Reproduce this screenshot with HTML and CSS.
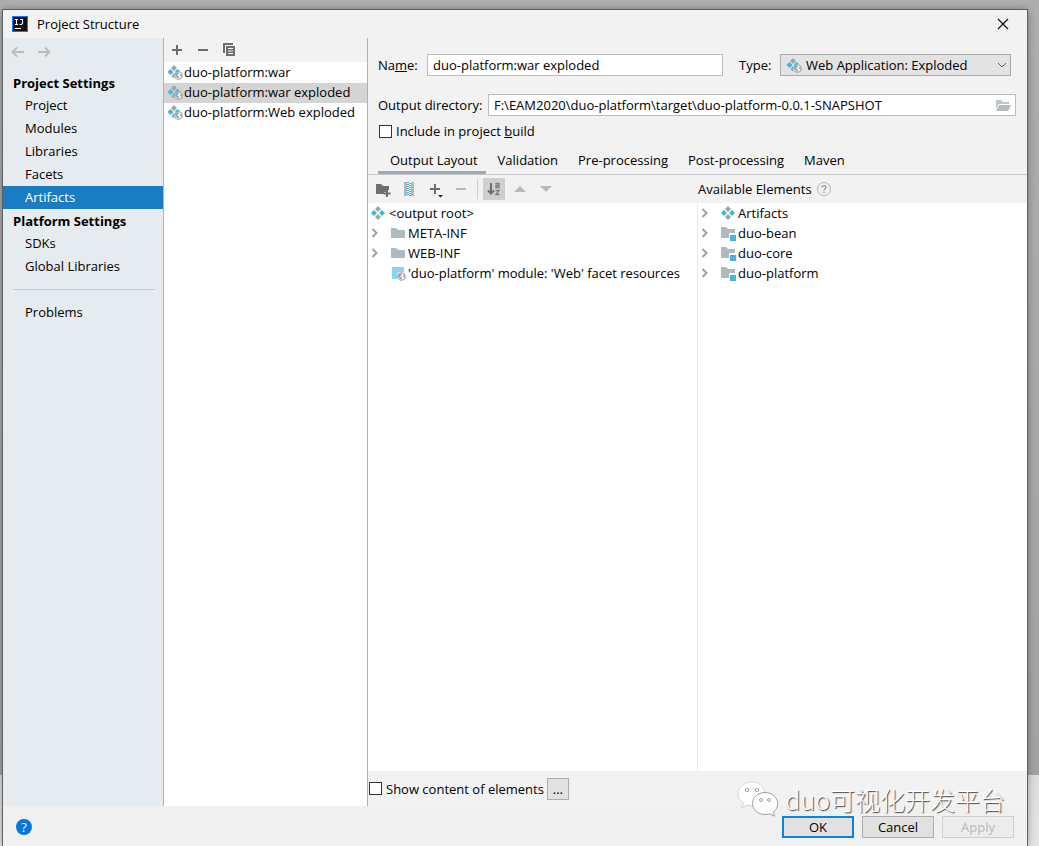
FILE: index.html
```
<!DOCTYPE html>
<html lang="en">
<head>
<meta charset="utf-8">
<title>Project Structure</title>
<link rel="stylesheet" href="styles.css">
</head>
<body>
<svg class="defs" width="0" height="0" aria-hidden="true">
  <symbol id="artifact" viewBox="0 0 16 16">
    <path fill="#9aa7b0" d="M8 1l3 3-3 3-3-3zM8 9l3 3-3 3-3-3z"/>
    <path fill="#40b6e0" d="M4 5l3 3-3 3-3-3zM12 5l3 3-3 3-3-3z"/>
  </symbol>
  <symbol id="globe" viewBox="0 0 8 8">
    <circle cx="4" cy="4" r="3.4" fill="#fff" fill-opacity=".7" stroke="#9aa7b0" stroke-width=".9"/>
    <path fill="#9aa7b0" d="M1 2l1.500-1 2 .5-.5 1.500-1.500.5 2 1.500-.5 2L1 4.500zM5.500 2.500l1.500.500v2l-1.500-.5z"/>
  </symbol>
  <symbol id="web-artifact" viewBox="0 0 16 16">
    <path fill="#9aa7b0" d="M7 1l3 3-3 3-3-3zM6 9.500l1.500-.5-.5 5.500-2.500-2z"/>
    <path fill="#40b6e0" d="M3.500 5l3 3-3 3-3-3zM10.500 5l2.500 2-4 1.500-1.500-.5z"/>
    <use href="#globe" x="7" y="7" width="9" height="9"/>
  </symbol>
  <symbol id="folder" viewBox="0 0 16 16">
    <path fill="#aeb9c0" d="M1 3h5l2 2h7v8H1z"/>
  </symbol>
  <symbol id="module" viewBox="0 0 16 16">
    <path fill="#aeb9c0" d="M1 2h5l2 2h7v4H9v5H1z"/>
    <path fill="#40b6e0" d="M10 10h6v6h-6z"/>
  </symbol>
  <symbol id="facet" viewBox="0 0 16 16">
    <path fill="#8fd3ef" d="M2 2h12v5H9L7 9v5H2z"/>
    <use href="#globe" x="7" y="7" width="9" height="9"/>
  </symbol>
  <symbol id="chevron" viewBox="0 0 10 10">
    <path d="M2.500 1l4 4-4 4" fill="none" stroke="#a0a0a0" stroke-width="2"/>
  </symbol>
</svg>

<main class="dialog">
  <header class="titlebar">
    <svg class="logo" width="16" height="16" viewBox="0 0 16 16" aria-hidden="true">
      <path fill="#087cfa" d="M0 0h16v16H0z"/>
      <path fill="#111" d="M1 1h14v14H1z"/>
      <path d="M3 3.500h3M3 8.500h3M4.500 3.500v5M8 3.500h2.500V7.500l-1 1H7.500M3 12.500h6" fill="none" stroke="#fff" stroke-width="1.100"/>
    </svg>
    <h1 class="title">Project Structure</h1>
    <button class="close" aria-label="Close"><svg width="12" height="12" viewBox="0 0 12 12"><path d="M1 1l10 10M11 1L1 11" stroke="#111" stroke-width="1.200"/></svg></button>
  </header>

  <div class="body">
    <nav class="sidebar">
      <div class="history">
        <button class="arrow" aria-label="Back"><svg width="14" height="12" viewBox="0 0 14 12"><path d="M13 6H1.500M6 1.500L1.500 6 6 10.500" fill="none" stroke="#bcbcbc" stroke-width="1.800"/></svg></button>
        <button class="arrow" aria-label="Forward"><svg width="14" height="12" viewBox="0 0 14 12"><path d="M0 6h11.500M7 1.500L11.500 6 7 10.500" fill="none" stroke="#bcbcbc" stroke-width="1.800"/></svg></button>
      </div>
      <h2 class="group">Project Settings</h2>
      <a class="nav-item" href="#">Project</a>
      <a class="nav-item" href="#">Modules</a>
      <a class="nav-item" href="#">Libraries</a>
      <a class="nav-item" href="#">Facets</a>
      <a class="nav-item selected" href="#">Artifacts</a>
      <h2 class="group">Platform Settings</h2>
      <a class="nav-item" href="#">SDKs</a>
      <a class="nav-item" href="#">Global Libraries</a>
      <hr class="rule">
      <a class="nav-item" href="#">Problems</a>
    </nav>

    <section class="artifacts">
      <div class="list-tools">
        <button class="tool" aria-label="Add"><svg width="16" height="16" viewBox="0 0 16 16"><path d="M8 3v10M3 8h10" stroke="#6e6e6e" stroke-width="2"/></svg></button>
        <button class="tool" aria-label="Remove"><svg width="16" height="16" viewBox="0 0 16 16"><path d="M3 8h10" stroke="#6e6e6e" stroke-width="2"/></svg></button>
        <button class="tool" aria-label="Copy"><svg width="16" height="16" viewBox="0 0 16 16"><path d="M3 11V2h9" fill="none" stroke="#6e6e6e" stroke-width="2"/><path fill="#6e6e6e" d="M5 4h9v10H5z"/><path d="M7 6.500h5M7 9h5M7 11.500h5" stroke="#f2f2f2"/></svg></button>
      </div>
      <ul class="list">
        <li><button class="row"><svg class="icon"><use href="#web-artifact"/></svg>duo-platform:war</button></li>
        <li><button class="row current"><svg class="icon"><use href="#web-artifact"/></svg>duo-platform:war exploded</button></li>
        <li><button class="row"><svg class="icon"><use href="#web-artifact"/></svg>duo-platform:Web exploded</button></li>
      </ul>
    </section>

    <section class="editor">
      <form class="form">
        <div class="field-row top">
          <label class="name-label" for="name">Na<u>m</u>e:</label>
          <input class="text name" id="name" value="duo-platform:war exploded">
          <label class="type-label" for="type">Type:</label>
          <div class="select-wrap">
            <select class="type" id="type"><option>Web Application: Exploded</option></select>
            <svg class="icon select-icon"><use href="#web-artifact"/></svg>
            <svg class="select-arrow" width="10" height="6" viewBox="0 0 10 6"><path d="M1 1l4 4 4-4" fill="none" stroke="#666"/></svg>
          </div>
        </div>
        <div class="field-row">
          <label class="dir-label" for="dir">Output directory:</label>
          <div class="dir-wrap">
            <input class="text dir" id="dir" value="F:\EAM2020\duo-platform\target\duo-platform-0.0.1-SNAPSHOT">
            <button type="button" class="browse" aria-label="Browse"><svg width="16" height="14" viewBox="0 0 16 14"><path fill="#c0c6ca" d="M1 2h5l2 2h6v2H4L1 11z"/><path fill="#b4bcc1" d="M4.500 7H16l-3 6H1z"/></svg></button>
          </div>
        </div>
        <label class="check include"><input type="checkbox" class="box"><span>Include in project <u>b</u>uild</span></label>
      </form>

      <div class="tabs" role="tablist">
        <button class="tab active" role="tab" aria-selected="true">Output Layout</button>
        <button class="tab" role="tab">Validation</button>
        <button class="tab" role="tab">Pre-processing</button>
        <button class="tab" role="tab">Post-processing</button>
        <button class="tab" role="tab">Maven</button>
      </div>

      <div class="panes">
        <div class="pane left">
          <div class="pane-tools">
            <button class="tool" aria-label="New folder"><svg width="16" height="16" viewBox="0 0 16 16"><path fill="#6e6e6e" d="M1 3h5l2 2h6v4h-3v2H9v2H1z"/><path d="M12 9v7M8.500 12.500h7" stroke="#6e6e6e" stroke-width="2"/></svg></button>
            <button class="tool" aria-label="New archive"><svg width="16" height="16" viewBox="0 0 16 16"><path fill="#aeb9c0" d="M3 1h3v14H3zM10 1h3v14h-3z"/><path d="M7 1v14" stroke="#40b6e0" stroke-width="2" stroke-dasharray="1 1"/><path d="M9 2v13" stroke="#40b6e0" stroke-width="2" stroke-dasharray="1 1"/></svg></button>
            <button class="tool" aria-label="Add copy of"><svg width="16" height="16" viewBox="0 0 16 16"><path d="M8 3v10M3 8h10" stroke="#6e6e6e" stroke-width="2"/><path fill="#222" d="M11 14h5l-2.500 2.500z"/></svg></button>
            <button class="tool" aria-label="Remove"><svg width="16" height="16" viewBox="0 0 16 16"><path d="M3 8h10" stroke="#b9b9b9" stroke-width="2"/></svg></button>
            <span class="divider"></span>
            <button class="tool pressed" aria-label="Sort by name"><svg width="16" height="16" viewBox="0 0 16 16"><path d="M5 2v10M2 9.500l3 3 3-3" fill="none" stroke="#6e6e6e" stroke-width="2"/><path d="M9.500 2.500H13v4H10v-2h3M9.500 9.500H13l-3 4h3.500" fill="none" stroke="#7b7b7b" stroke-width="1.300"/></svg></button>
            <button class="tool" aria-label="Move up"><svg width="16" height="16" viewBox="0 0 16 16"><path fill="#b9b9b9" d="M2 11h12L8 5z"/></svg></button>
            <button class="tool" aria-label="Move down"><svg width="16" height="16" viewBox="0 0 16 16"><path fill="#b9b9b9" d="M2 5h12l-6 6z"/></svg></button>
          </div>
          <ul class="tree">
            <li class="node root"><svg class="icon"><use href="#artifact"/></svg>&lt;output root&gt;</li>
            <li class="node"><svg class="twist"><use href="#chevron"/></svg><svg class="icon"><use href="#folder"/></svg>META-INF</li>
            <li class="node"><svg class="twist"><use href="#chevron"/></svg><svg class="icon"><use href="#folder"/></svg>WEB-INF</li>
            <li class="node"><span class="twist"></span><svg class="icon"><use href="#facet"/></svg>'duo-platform' module: 'Web' facet resources</li>
          </ul>
        </div>
        <div class="pane right">
          <div class="pane-tools heading">Available Elements
            <svg width="14" height="14" viewBox="0 0 14 14" aria-hidden="true"><circle cx="7" cy="7" r="6.500" fill="none" stroke="#aeb9c0"/><path d="M5 5.500c0-2.500 4-2.500 4 0 0 1.500-2 1.500-2 3M7 9.500v1.500" fill="none" stroke="#8f9aa1" stroke-width="1.300"/></svg>
          </div>
          <ul class="tree">
            <li class="node"><svg class="twist"><use href="#chevron"/></svg><svg class="icon"><use href="#artifact"/></svg>Artifacts</li>
            <li class="node"><svg class="twist"><use href="#chevron"/></svg><svg class="icon"><use href="#module"/></svg>duo-bean</li>
            <li class="node"><svg class="twist"><use href="#chevron"/></svg><svg class="icon"><use href="#module"/></svg>duo-core</li>
            <li class="node"><svg class="twist"><use href="#chevron"/></svg><svg class="icon"><use href="#module"/></svg>duo-platform</li>
          </ul>
        </div>
      </div>

      <div class="options">
        <label class="check"><input type="checkbox" class="box"><span>Show content of elements</span></label>
        <button class="more">...</button>
      </div>
    </section>
  </div>

  <footer class="footer">
    <button class="help" aria-label="Help">?</button>
    <div class="actions">
      <button class="btn primary">OK</button>
      <button class="btn">Cancel</button>
      <button class="btn" disabled>Apply</button>
    </div>
  </footer>

  <div class="watermark">
    <svg width="42" height="36" viewBox="0 0 42 36" aria-hidden="true">
      <g fill="#fff" stroke="#8a8a8a" stroke-width=".8">
        <path stroke="#ccc" d="M15 1C7 1 1 6.500 1 13c0 4 2 7 5.500 9L5 27l5-3c2 .6 4 .8 6 .8L28 12C27 5.500 22 1 15 1z"/>
        <path d="M28 11.500c-7 0-12.500 5-12.500 11s5.500 11 12.500 11c1.500 0 3-.2 4.500-.7l5 2.400-1.300-4c2.800-2 4.500-5 4.500-8.700 0-6-5.700-11-12.700-11z"/>
        <circle cx="10" cy="9" r="1.600"/><circle cx="20" cy="9" r="1.600"/>
        <circle cx="24" cy="19" r="1.500"/><circle cx="32" cy="19" r="1.500"/>
      </g>
    </svg>
    <span>duo可视化开发平台</span>
  </div>
</main>
</body>
</html>
```
FILE: styles.css
```
* { box-sizing: border-box; }

body {
  margin: 0;
  min-height: 100vh;
  display: flex;
  padding: 10px 12px 0 3px;
  background: linear-gradient(to bottom, #aeaeae 0, #a2a2a2 calc(100vh - 71px), #dcdcdc calc(100vh - 71px), #e4e4e4 100%);
  color: #000;
  font: 13px/20px "Open Sans", "Noto Sans CJK SC", sans-serif;
}

button, input, select { font: inherit; color: inherit; margin: 0; }
button { border: 0; padding: 0; background: none; }
ul { list-style: none; margin: 0; padding: 0; }
svg { display: block; flex: none; }
.defs { position: absolute; }
.icon { width: 16px; height: 16px; }

.dialog {
  position: relative;
  flex: 1;
  min-width: 0;
  display: flex;
  flex-direction: column;
  background: #f2f2f2;
  box-shadow: 0 0 0 1px #606060, 0 0 8px rgba(0, 0, 0, .4);
}

.titlebar { display: flex; align-items: center; height: 28px; padding: 0 18px 0 9px; }
.title { flex: 1; margin: 0 0 0 9px; font-size: 13px; font-weight: 400; }

.body { flex: 1; display: flex; min-height: 0; }

.sidebar { width: 161px; background: #e6ebef; border-right: 1px solid #b0b3b5; }
.history { display: flex; gap: 13px; height: 33px; padding: 8px 0 0 8px; align-items: flex-start; }
.group { margin: 0; padding: 2px 0 0 10px; font-size: 13px; line-height: 21px; font-weight: 700; }
.nav-item { display: block; padding-left: 22px; line-height: 23px; color: inherit; text-decoration: none; }
.nav-item.selected { background: #1a7dc4; color: #fff; }
.rule { margin: 11px 8px 11px 10px; border: 0; border-top: 1px solid #c5cacd; }

.artifacts { width: 204px; background: #fff; border-right: 1px solid #b0b0b0; }
.list-tools { display: flex; align-items: center; gap: 4px; height: 24px; padding-left: 2px; background: #f2f2f2; }
.tool { width: 22px; height: 22px; display: flex; align-items: center; justify-content: center; }
.tool svg { overflow: visible; }
.tool.pressed { background: #cfcfcf; }
.row { display: flex; align-items: center; gap: 1px; width: 100%; height: 20px; padding: 0 0 2px 3px; white-space: nowrap; }
.list { padding-top: 1px; }
.row.current { background: #d4d4d4; }

.editor { flex: 1; min-width: 0; display: flex; flex-direction: column; }
.form { padding: 16px 11px 0 10px; }
.field-row { display: flex; align-items: center; height: 22px; margin-bottom: 18px; }
.field-row.top { padding-right: 5px; }
.name-label { width: 49px; }
.type-label { width: 41px; margin-left: 16px; }
.dir-label { width: 110px; white-space: nowrap; }
.text { height: 22px; border: 1px solid #bdbdbd; padding: 0 5px 1px; background: #fff; min-width: 0; }
.name { flex: 1; }
.select-wrap { position: relative; width: 231px; }
.type { display: block; width: 100%; height: 22px; padding: 0 20px 0 25px; border: 1px solid #ababab; border-radius: 0; background: #e3e3e3; appearance: none; }
.select-icon { position: absolute; left: 6px; top: 3px; pointer-events: none; }
.select-arrow { position: absolute; right: 4px; top: 8px; pointer-events: none; }
.dir-wrap { position: relative; flex: 1; display: flex; }
.dir { width: 100%; padding-right: 26px; }
.browse { position: absolute; right: 5px; top: 4px; }
.check { display: flex; align-items: center; gap: 4px; }
.include { width: max-content; margin-left: 1px; height: 20px; margin-top: -13px; }
.box { appearance: none; width: 13px; height: 13px; border: 1px solid #333; background: #fff; }

.tabs { display: flex; height: 34px; padding-left: 10px; border-bottom: 1px solid #c8c8c8; }
.tab { padding: 8px 8px 0 12px; border-bottom: 3px solid transparent; }
.tab.active { border-bottom-color: #9ba9bb; }

.panes { flex: 1; display: flex; min-height: 0; }
.pane { display: flex; flex-direction: column; min-width: 0; }
.left { width: 329px; }
.right { flex: 1; }
.pane-tools { display: flex; align-items: center; gap: 4px; height: 28px; padding-left: 4px; }
.heading { gap: 5px; padding-left: 1px; }
.divider { width: 1px; height: 20px; margin: 0 1px; background: #cfcfcf; }
.tree { flex: 1; background: #fff; }
.right .tree { border-left: 1px solid #ececec; }
.node { display: flex; align-items: center; gap: 2px; height: 20px; padding-left: 2px; white-space: nowrap; }
.root { gap: 3px; }
.twist { width: 10px; height: 10px; margin-right: 8px; }

.options { display: flex; align-items: center; gap: 3px; height: 35px; padding-left: 1px; }
.more { width: 22px; height: 22px; border: 1px solid #adadad; background: #e1e1e1; line-height: 18px; }

.footer { display: flex; align-items: center; justify-content: space-between; height: 40px; padding: 2px 13px 0; background: #f0f0f0; }
.help { width: 16px; height: 16px; border-radius: 50%; background: #0078d7; color: #fff; line-height: 16px; }
.actions { display: flex; gap: 8px; }
.btn { width: 72px; height: 22px; border: 1px solid #adadad; background: #e1e1e1; line-height: 18px; }
.btn.primary { border: 2px solid #0a84dc; }
.btn:disabled { color: #b8b8b8; border-color: #cfcfcf; background: #ececec; }

.watermark {
  position: absolute;
  right: 22px;
  bottom: 29px;
  display: flex;
  align-items: center;
  gap: 6px;
  color: #fff;
  font: 300 25px/36px "Noto Sans CJK SC", sans-serif;
  text-shadow: 1px 1px 1px #444;
  pointer-events: none;
}
```
